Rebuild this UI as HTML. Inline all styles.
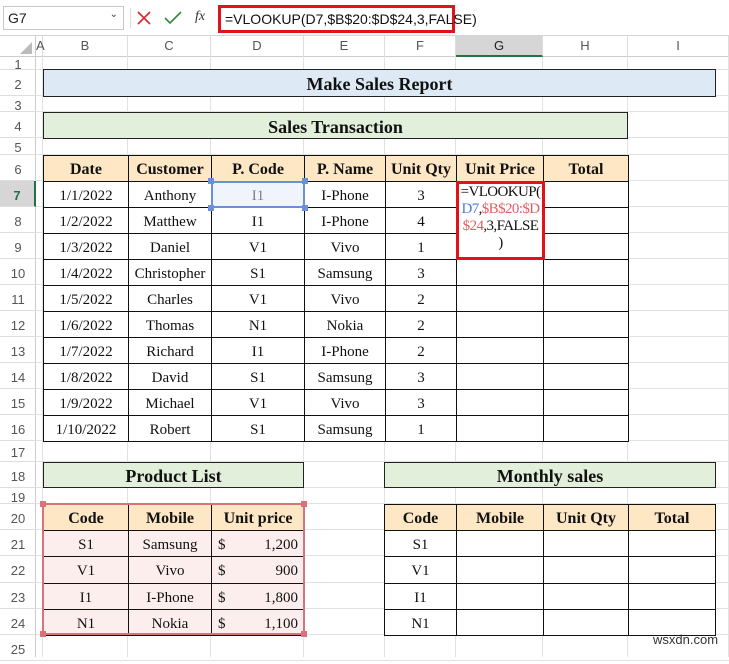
<!DOCTYPE html><html><head><meta charset="utf-8"><style>
body{margin:0;width:729px;height:648px;overflow:hidden;background:#fff;position:relative;font-family:"Liberation Serif",serif}
div{position:absolute;box-sizing:border-box}
.hd{font-family:"Liberation Sans",sans-serif;font-size:13px;color:#555;text-align:center}
.c{font-size:15px;color:#111;text-align:center;display:flex;align-items:center;justify-content:center;white-space:nowrap;padding-top:3px}
.b{font-weight:bold;font-size:16px}
</style></head><body>
<div style="left:0;top:0;width:729px;height:36px;background:#fff;border-bottom:1px solid #d4d4d4"></div>
<div style="left:3px;top:6px;width:121px;height:24px;border:1px solid #c8c8c8;font-family:'Liberation Sans',sans-serif;font-size:14px;padding:3px 4px;color:#222">G7<span style="position:absolute;right:5px;top:2px;font-size:10px;color:#444">⌄</span></div>
<div style="left:130px;top:8px;width:1px;height:20px;background:#ddd"></div>
<svg style="position:absolute;left:137px;top:11px" width="14" height="14"><path d="M1 1L13 13M13 1L1 13" stroke="#d9262d" stroke-width="1.6"/></svg>
<svg style="position:absolute;left:164px;top:11px" width="18" height="14"><path d="M1 7L6 12L17 1" stroke="#2e8b3a" stroke-width="1.6" fill="none"/></svg>
<div style="left:195px;top:9px;font-family:'Liberation Serif',serif;font-style:italic;font-size:14px;color:#333">fx</div>
<div style="left:218px;top:5px;width:237px;height:28px;border:3px solid #e0121c;font-family:'Liberation Sans',sans-serif;font-size:14px;padding:3px 4px;color:#111;white-space:nowrap">=VLOOKUP(D7,$B$20:$D$24,3,FALSE)</div>
<div id="g"></div>
<script>
(function(){
const R=[[1,56,70],[2,70,96],[3,96,112],[4,112,138],[5,138,155],[6,155,181]];
for(let i=7;i<=16;i++)R.push([i,181+(i-7)*26,207+(i-7)*26]);
R.push([17,441,462],[18,462,488],[19,488,504],[20,504,530],[21,530,556],[22,556,583],[23,583,609],[24,609,635],[25,635,661]);
const C=[['A',36,43],['B',43,128],['C',128,211],['D',211,304],['E',304,385],['F',385,456],['G',456,543],['H',543,628],['I',628,729]];
let h='';
h+=`<div style="left:0;top:36px;width:729px;height:21px;border-bottom:1px solid #ccc;background:#fff"></div>`;
h+=`<div style="left:0;top:36px;width:36px;height:21px;border-right:1px solid #ccc"><svg width="36" height="21"><path d="M32 6L32 18L20 18Z" fill="#bbb"/></svg></div>`;
for(const [n,a,b] of C){const sel=n=='G';h+=`<div class="hd" style="left:${a}px;top:36px;width:${b-a}px;height:21px;line-height:20px;border-right:1px solid #ddd;${sel?'background:#d6d6d6;border-bottom:2px solid #217346;color:#222':''}">${n}</div>`;
h+=`<div style="left:${b-1}px;top:57px;width:1px;height:600px;background:#e2e2e2"></div>`}
h+=`<div style="left:0;top:57px;width:36px;height:600px;border-right:1px solid #ccc;background:#fff"></div>`;
for(const [n,a,b] of R){const sel=n==7;h+=`<div class="hd" style="left:0;top:${a}px;width:36px;height:${b-a}px;line-height:${b-a+3}px;border-bottom:1px solid #ddd;${sel?'background:#d6d6d6;border-right:2px solid #217346;color:#217346;font-weight:bold':''}">${n}</div>`;
h+=`<div style="left:36px;top:${b-1}px;width:700px;height:1px;background:#e2e2e2"></div>`}
document.getElementById('g').innerHTML=h;
})();
</script>
<div class="c b" style="left:43px;top:69px;width:673px;height:28px;background:#dde9f5;border:1.5px solid #222;font-size:18px">Make Sales Report</div>
<div class="c b" style="left:43px;top:112px;width:585px;height:27px;background:#e2efda;border:1.5px solid #222;font-size:18px">Sales Transaction</div>
<div class="c b" style="left:43px;top:462px;width:261px;height:26px;background:#e2efda;border:1.5px solid #222;font-size:18px">Product List</div>
<div class="c b" style="left:384px;top:462px;width:332px;height:26px;background:#e2efda;border:1.5px solid #222;font-size:18px">Monthly sales</div>
<div id="t"></div>
<script>
(function(){
function table(xs,ys,rows,opts){let h='';
for(let r=0;r<rows.length;r++)for(let c=0;c<xs.length-1;c++){const hdr=r==0;const bg=hdr?'#fde7c4':(opts.bg||'#fff');
let txt=(rows[r]&&rows[r][c])||'';
h+=`<div class="c${hdr?' b':''}" style="left:${xs[c]}px;top:${ys[r]}px;width:${xs[c+1]-xs[c]+1}px;height:${ys[r+1]-ys[r]+1}px;background:${bg};border:1px solid #111;${opts.cs&&!hdr&&c==opts.cs?'justify-content:space-between;padding-left:6px;padding-right:6px':''}">${txt}</div>`}
return h}
const ys=[155,181];for(let i=1;i<=10;i++)ys.push(181+i*26);
const d=[['Date','Customer','P. Code','P. Name','Unit Qty','Unit Price','Total'],
['1/1/2022','Anthony','I1','I-Phone','3'],['1/2/2022','Matthew','I1','I-Phone','4'],['1/3/2022','Daniel','V1','Vivo','1'],['1/4/2022','Christopher','S1','Samsung','3'],['1/5/2022','Charles','V1','Vivo','2'],['1/6/2022','Thomas','N1','Nokia','2'],['1/7/2022','Richard','I1','I-Phone','2'],['1/8/2022','David','S1','Samsung','3'],['1/9/2022','Michael','V1','Vivo','3'],['1/10/2022','Robert','S1','Samsung','1']];
let h=table([43,128,211,304,385,456,543,628],ys,d,{});
const y2=[504,530,556,583,609,635];
h+=table([43,128,211,304],y2,[['Code','Mobile','Unit price'],['S1','Samsung','<span>$</span><span>1,200</span>'],['V1','Vivo','<span>$</span><span>900</span>'],['I1','I-Phone','<span>$</span><span>1,800</span>'],['N1','Nokia','<span>$</span><span>1,100</span>']],{bg:'#fdeeee',cs:2});
h+=table([384,456,543,628,715],y2,[['Code','Mobile','Unit Qty','Total'],['S1'],['V1'],['I1'],['N1']],{});
document.getElementById('t').innerHTML=h;
})();
</script>
<div style="left:42px;top:503px;width:263px;height:132px;border:2px solid #d9727a"></div>
<div style="left:40px;top:501px;width:6px;height:6px;background:#d9727a"></div>
<div style="left:301px;top:501px;width:6px;height:6px;background:#d9727a"></div>
<div style="left:40px;top:631px;width:6px;height:6px;background:#d9727a"></div>
<div style="left:301px;top:631px;width:6px;height:6px;background:#d9727a"></div>
<div style="left:211px;top:181px;width:94px;height:27px;border:2px solid #6b8fd8;background:rgba(225,235,252,.5)"></div>
<div style="left:208px;top:178px;width:6px;height:6px;background:#6b8fd8"></div>
<div style="left:302px;top:178px;width:6px;height:6px;background:#6b8fd8"></div>
<div style="left:208px;top:205px;width:6px;height:6px;background:#6b8fd8"></div>
<div style="left:302px;top:205px;width:6px;height:6px;background:#6b8fd8"></div>
<div style="left:456px;top:181px;width:89px;height:79px;border:3px solid #e0121c;background:#fff;font-size:15px;line-height:17px;padding:0;color:#111;text-align:center;white-space:nowrap;letter-spacing:-0.6px;overflow:hidden">=VLOOKUP(<br><span style="color:#4a7bd0">D7</span>,<span style="color:#e06060">$B$20:$D</span><br><span style="color:#e06060">$24</span>,3,FALSE<br>)</div>
<div style="left:653px;top:632px;font-family:'Liberation Sans',sans-serif;font-size:13px;color:#333">wsxdn.com</div>
</body></html>
